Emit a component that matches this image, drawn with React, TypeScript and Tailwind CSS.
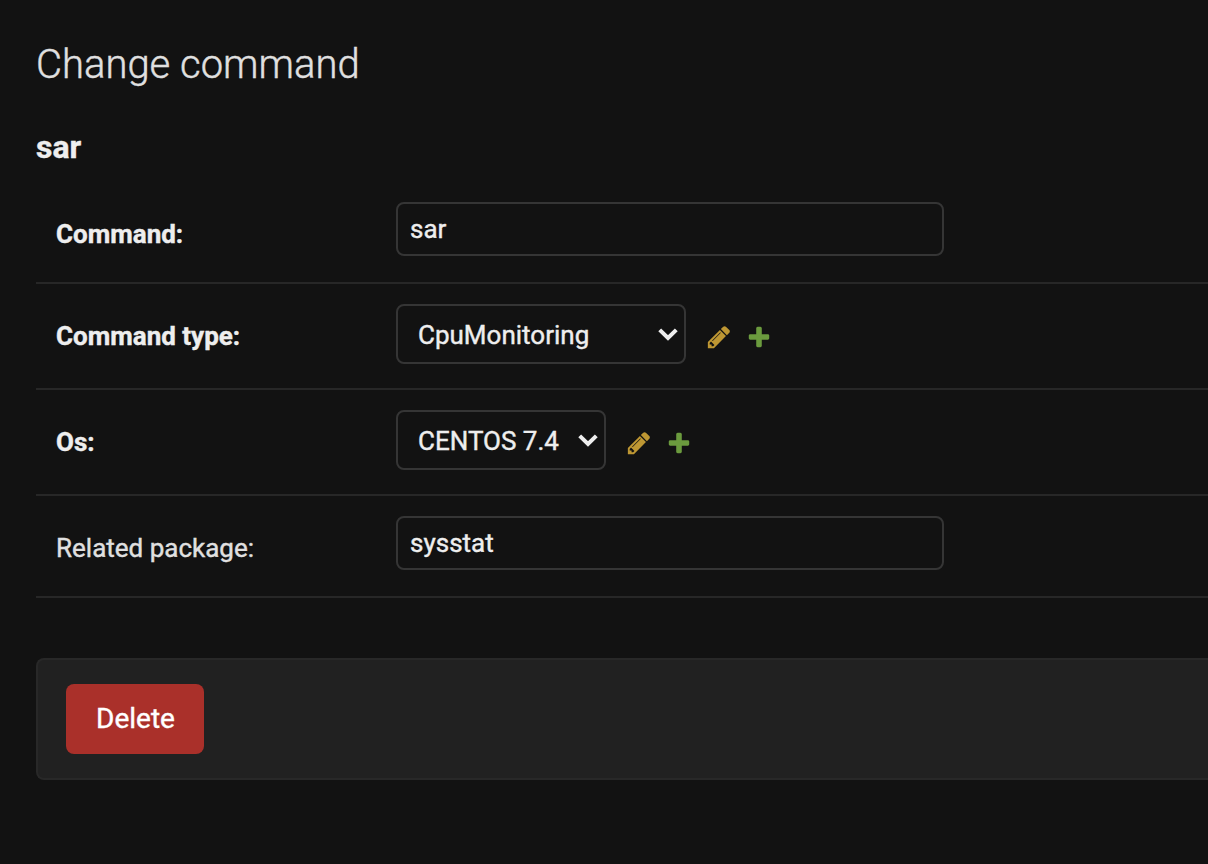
import type { ReactNode } from "react";

function PencilIcon() {
  return (
    <svg width="26" height="26" viewBox="0 0 1792 1792" fill="#be9733" aria-hidden="true">
      <path d="M491 1536l91-91-235-235-91 91v107h128v128h107zm523-928q0-22-22-22-10 0-17 7l-542 542q-7 7-7 17 0 22 22 22 10 0 17-7l542-542q7-7 7-17zm-54-192l416 416-832 832h-416v-416zm683 96q0 53-37 90l-166 166-416-416 166-165q36-38 90-38 53 0 91 38l235 234q37 39 37 91z" />
    </svg>
  );
}

function PlusIcon() {
  return (
    <svg width="26" height="26" viewBox="0 0 1792 1792" fill="#6b9b3e" aria-hidden="true">
      <path d="M1600 796v192q0 40-28 68t-68 28h-416v416q0 40-28 68t-68 28h-192q-40 0-68-28t-28-68v-416h-416q-40 0-68-28t-28-68v-192q0-40 28-68t68-28h416v-416q0-40 28-68t68-28h192q40 0 68 28t28 68v416h416q40 0 68 28t28 68z" />
    </svg>
  );
}

function Row({ label, required, height, children }: { label: string; required?: boolean; height: string; children: ReactNode }) {
  return (
    <div className={`flex items-start border-b-2 border-[#272727] pl-5 pt-5 ${height}`}>
      <div
        className={`w-[340px] shrink-0 pt-[17px] text-[26px] leading-[30px] ${
          required ? "font-bold text-[#eeeeee]" : "text-[#e0e0e0]"
        }`}
      >
        {label}
      </div>
      {children}
    </div>
  );
}

function TextBox({ value }: { value: string }) {
  return (
    <div className="h-[54px] w-[548px] rounded-lg border-2 border-[#353535] px-3 pt-[10px] text-[26px] leading-[30px] text-[#eeeeee]">
      {value}
    </div>
  );
}

function SelectBox({ value, width }: { value: string; width: string }) {
  return (
    <div className="flex items-start">
      <div
        className={`flex h-[60px] items-start justify-between rounded-lg border-2 border-[#353535] pl-5 pr-[5px] pt-[14px] text-[26px] leading-[30px] text-[#eeeeee] ${width}`}
      >
        <span>{value}</span>
        <svg className="mt-[7px]" width="22" height="15" viewBox="0 0 22 15" fill="none" stroke="#eeeeee" strokeWidth="4" aria-hidden="true">
          <path d="M2.7 2.8L11 11L19.3 2.8" />
        </svg>
      </div>
      <div className="flex gap-[14px] pl-5 pt-5">
        <PencilIcon />
        <PlusIcon />
      </div>
    </div>
  );
}

export default function App() {
  return (
    <main className="h-[864px] overflow-hidden bg-[#121212] pl-9 font-['Roboto',sans-serif] [-webkit-text-stroke:0.4px]">
      <h1 className="pt-[41px] text-[40px] font-light leading-[48px] text-[#e0e0e0]">Change command</h1>
      <h2 className="mt-[39px] text-[32px] font-bold leading-[38px] text-[#eeeeee]">sar</h2>
      <div className="mt-4">
        <Row label="Command:" required height="h-[102px]">
          <TextBox value="sar" />
        </Row>
        <Row label="Command type:" required height="h-[106px]">
          <SelectBox value="CpuMonitoring" width="w-[290px]" />
        </Row>
        <Row label="Os:" required height="h-[106px]">
          <SelectBox value="CENTOS 7.4" width="w-[210px]" />
        </Row>
        <Row label="Related package:" height="h-[102px]">
          <TextBox value="sysstat" />
        </Row>
      </div>
      <div className="mt-[60px] h-[122px] rounded-l-lg border-2 border-r-0 border-[#282828] bg-[#212121] pl-7 pt-6">
        <button className="h-[70px] w-[138px] rounded-lg bg-[#aa302a] pl-px text-[28px] leading-[30px] text-white">Delete</button>
      </div>
    </main>
  );
}
